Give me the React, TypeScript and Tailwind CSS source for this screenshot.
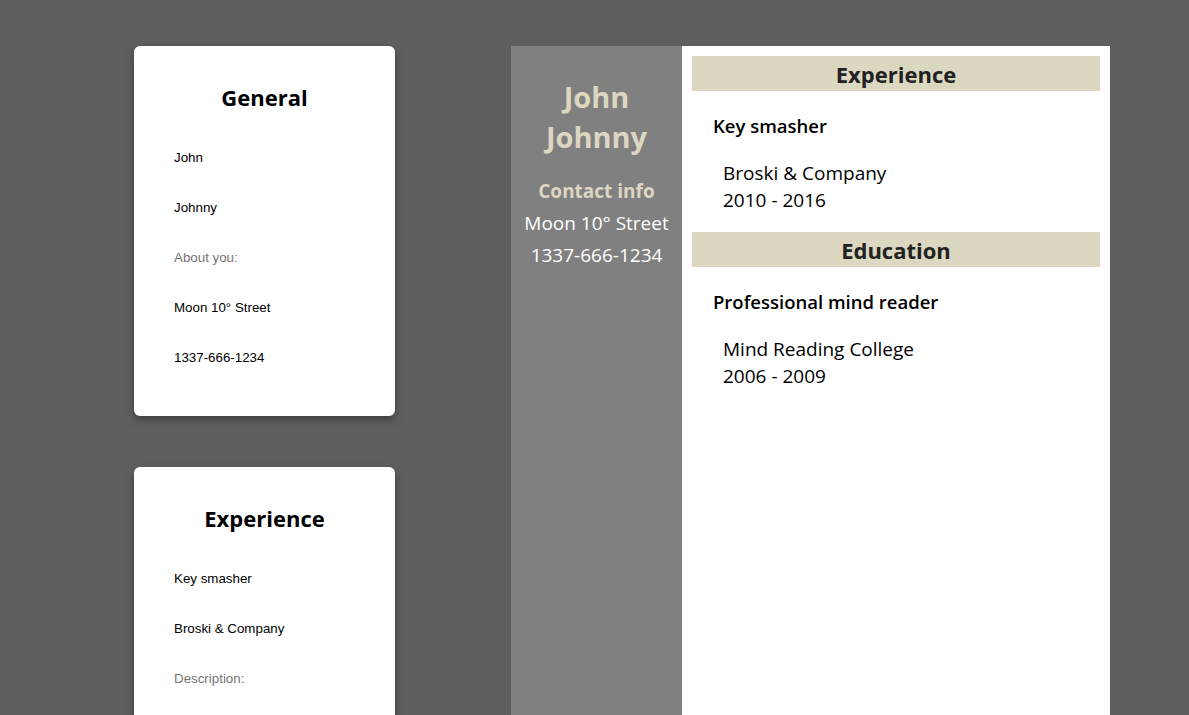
import React from "react";

const general = [
  { value: "John" },
  { value: "Johnny" },
  { value: "", placeholder: "About you:" },
  { value: "Moon 10° Street" },
  { value: "1337-666-1234" },
];

const experience = [
  { value: "Key smasher" },
  { value: "Broski & Company" },
  { value: "", placeholder: "Description:" },
  { value: "2010" },
];

const FormCard = ({
  title,
  fields,
}: {
  title: string;
  fields: { value: string; placeholder?: string }[];
}) => (
  <div className="bg-white rounded-md shadow-[0_4px_8px_rgba(0,0,0,0.35)] w-[261px] px-10 pt-[36px] pb-[34px]">
    <h2 className="text-center font-bold text-[22px] leading-[30px] text-black mb-[20px] font-['Open_Sans',sans-serif]">
      {title}
    </h2>
    <div className="flex flex-col">
      {fields.map((f, i) => (
        <input
          key={i}
          readOnly
          defaultValue={f.value}
          placeholder={f.placeholder}
          className="h-[50px] w-full outline-none text-[13.33px] text-black placeholder:text-[#757575] font-['Liberation_Sans',Arial,sans-serif] bg-transparent"
        />
      ))}
    </div>
  </div>
);

const Section = ({
  title,
  role,
  place,
  years,
}: {
  title: string;
  role: string;
  place: string;
  years: string;
}) => (
  <div>
    <div className="bg-[#dcd7c1] h-[35px] flex items-center justify-center pt-[2px]">
      <h2 className="font-bold text-[22px] text-[#222]">{title}</h2>
    </div>
    <div className="pl-[21px] pt-[20px] pb-[18px]">
      <h3 className="font-semibold text-[18.5px] leading-[30px] text-black">{role}</h3>
      <div className="pl-[10px] pt-[19px] text-[19px] leading-[27px] text-black">
        <p>{place}</p>
        <p>{years}</p>
      </div>
    </div>
  </div>
);

export default function App() {
  return (
    <div className="min-h-screen bg-[#5f5f5f] font-['Open_Sans',sans-serif] overflow-hidden h-[715px]">
      <div className="flex pt-[46px] pl-[134px] gap-[116px]">
        <div className="flex flex-col gap-[51px]">
          <FormCard title="General" fields={general} />
          <FormCard title="Experience" fields={experience} />
        </div>
        <div className="flex w-[599px] min-h-[700px]">
          <aside className="w-[171px] bg-[#808080] flex flex-col items-center pt-[31px] text-center">
            <h1 className="font-bold text-[29px] leading-[40px] text-[#dcd7c1]">
              John
              <br />
              Johnny
            </h1>
            <h3 className="mt-[18px] font-bold text-[19px] leading-[32px] text-[#dcd7c1]">Contact info</h3>
            <p className="text-[19px] leading-[32px] text-white">Moon 10° Street</p>
            <p className="text-[19px] leading-[32px] text-white">1337-666-1234</p>
          </aside>
          <main className="flex-1 bg-white p-[10px]">
            <Section title="Experience" role="Key smasher" place="Broski & Company" years="2010 - 2016" />
            <Section
              title="Education"
              role="Professional mind reader"
              place="Mind Reading College"
              years="2006 - 2009"
            />
          </main>
        </div>
      </div>
    </div>
  );
}
